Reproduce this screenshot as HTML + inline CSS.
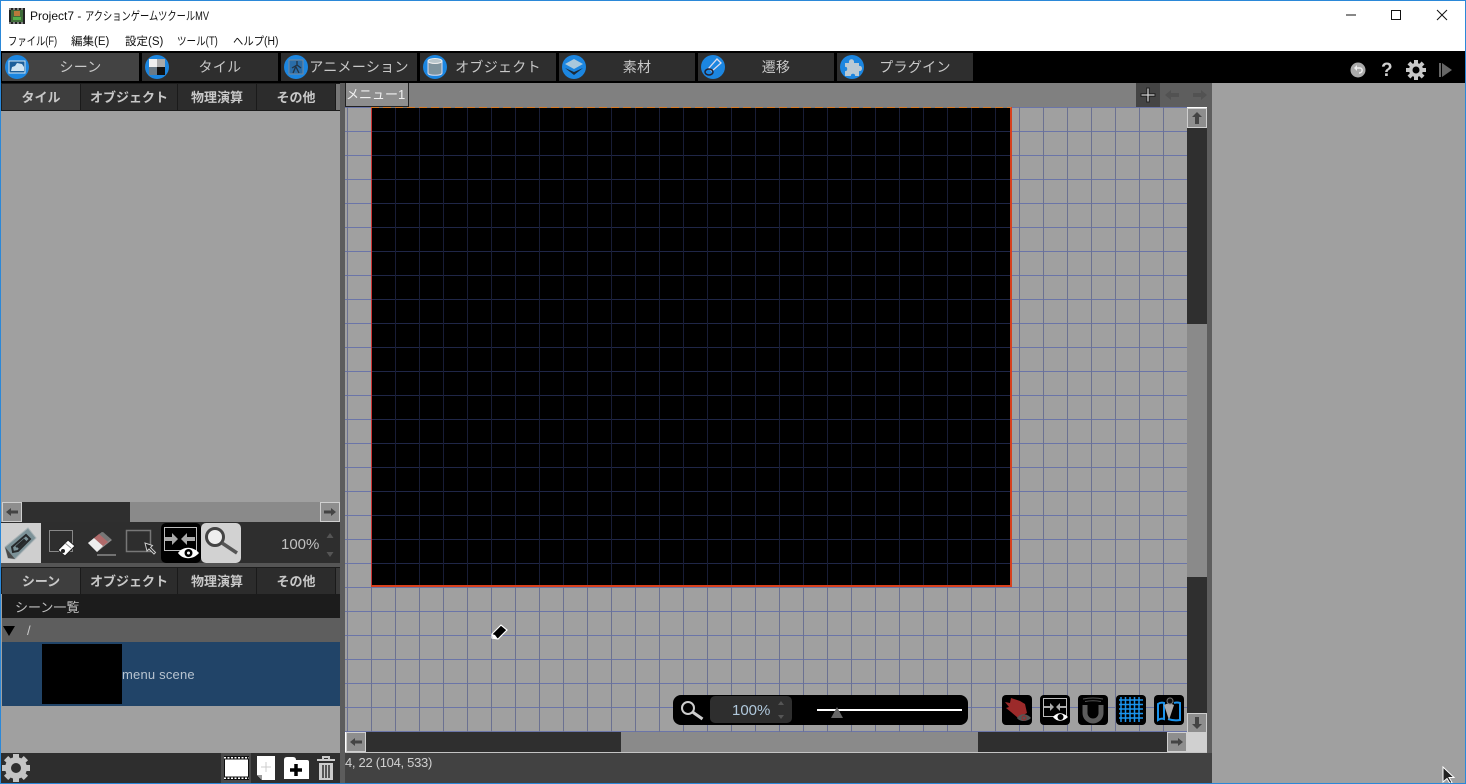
<!DOCTYPE html>
<html lang="ja"><head><meta charset="utf-8"><title>Project7</title>
<style>
*{box-sizing:border-box}
html,body{margin:0;padding:0;width:1466px;height:784px;overflow:hidden;background:#fff}
body{position:relative;font-family:"Liberation Sans","Noto Sans CJK JP",sans-serif}
.a{position:absolute}
.t{position:absolute;white-space:nowrap;line-height:1}
.sx{display:inline-block;transform-origin:left center}
.tab{position:absolute;top:53px;height:28px;background:#2e2e2e;color:#c8c8c8;font-size:14px;line-height:28px;white-space:nowrap}
.tab span{position:absolute;top:0;left:20px;right:0;text-align:center;letter-spacing:.3px}
.tab svg{position:absolute;left:2px;top:1px}
.st{position:absolute;height:26px;background:#2c2c2c;color:#c8c8c8;font-size:13px;font-weight:bold;line-height:28px;text-align:center;white-space:nowrap;border-right:1px solid #1a1a1a}
.btn{position:absolute;width:20px;height:20px;background:#8e8e8e;border:1px solid #cfcfcf}
.btn svg,.a svg{display:block}
</style></head><body>

<!-- title bar -->
<svg class="a" style="left:9px;top:8px" width="16" height="16" viewBox="0 0 16 16"><rect width="16" height="16" fill="#222"/><rect x="2" y="2" width="12" height="12" fill="#3f6b3a"/><rect x="5" y="3" width="6" height="5" fill="#b9793b"/><rect x="4" y="9" width="8" height="3" fill="#55b04a"/><path d="M0 1h16M0 15h16" stroke="#ddd" stroke-dasharray="2 2"/></svg>
<div class="t" style="left:30px;top:10px;font-size:12px;color:#111">Project7 - <span class="sx" style="transform:scaleX(.77)">アクションゲームツクールMV</span></div>
<div class="t sx" style="left:8px;top:37px;font-size:11.5px;color:#111;transform:scaleX(.81)">ファイル(F)</div>
<div class="t" style="left:71px;top:37px;font-size:11.5px;color:#111">編集(E)</div>
<div class="t" style="left:125px;top:37px;font-size:11.5px;color:#111">設定(S)</div>
<div class="t sx" style="left:177px;top:37px;font-size:11.5px;color:#111;transform:scaleX(.83)">ツール(T)</div>
<div class="t sx" style="left:233px;top:37px;font-size:11.5px;color:#111;transform:scaleX(.9)">ヘルプ(H)</div>
<svg class="a" style="left:1340px;top:8px" width="115" height="14" viewBox="0 0 115 14"><path d="M6 7h10" stroke="#111"/><rect x="51.5" y="2.5" width="9" height="9" fill="none" stroke="#111"/><path d="M97 2l10 10M107 2l-10 10" stroke="#111"/></svg>

<!-- toolbar -->
<div class="a" style="left:1px;top:51px;width:1464px;height:32px;background:#000"></div>
<div class="tab" style="left:2px;width:137px;background:#434343"><svg width="26" height="26" viewBox="0 0 26 26"><circle cx="13" cy="13" r="12" fill="#1c86e0"/><rect x="5" y="7" width="16" height="12" fill="#1d5f9a" stroke="#cfe4f2"/><path d="M7 17l1-4 3-1 2-3 5 1 2 3v4z" fill="#cfe4f2"/></svg><span>シーン</span></div>
<div class="tab" style="left:142px;width:136px"><svg width="26" height="26" viewBox="0 0 26 26"><circle cx="13" cy="13" r="12" fill="#1c86e0"/><rect x="5" y="5" width="8" height="8" fill="#eee"/><rect x="13" y="5" width="8" height="8" fill="#aaa"/><rect x="5" y="13" width="8" height="8" fill="#6b7a86"/><rect x="13" y="13" width="8" height="8" fill="#111"/></svg><span>タイル</span></div>
<div class="tab" style="left:281px;width:136px"><svg width="26" height="26" viewBox="0 0 26 26"><circle cx="13" cy="13" r="12" fill="#1c86e0"/><rect x="6" y="6" width="14" height="14" fill="#2a6da8" stroke="#789"/><path d="M14 7v4l-5 3M14 11l4 3M13 12l-3 7M13 13l3 6" stroke="#234" fill="none" stroke-width="1.300"/></svg><span>アニメーション</span></div>
<div class="tab" style="left:420px;width:136px"><svg width="26" height="26" viewBox="0 0 26 26"><circle cx="13" cy="13" r="12" fill="#1c86e0"/><path d="M6 7v12c0 3 14 3 14 0V7z" fill="#7f949e" stroke="#dde" /><ellipse cx="13" cy="7" rx="7" ry="2.500" fill="#b8c6cc" stroke="#eee"/></svg><span>オブジェクト</span></div>
<div class="tab" style="left:559px;width:136px"><svg width="26" height="26" viewBox="0 0 26 26"><circle cx="13" cy="13" r="12" fill="#1c86e0"/><path d="M13 5l9 5-9 5-9-5z" fill="#a9c8dc"/><path d="M4 14l9 4 9-4-9 7z" fill="#1a2a38"/></svg><span>素材</span></div>
<div class="tab" style="left:698px;width:136px"><svg width="26" height="26" viewBox="0 0 26 26"><circle cx="13" cy="13" r="12" fill="#1c86e0"/><path d="M17 5l4 4-9 8-3-3z" fill="none" stroke="#dde" stroke-width="1.300"/><ellipse cx="9" cy="18" rx="4" ry="3" fill="none" stroke="#223" stroke-width="1.500"/></svg><span>遷移</span></div>
<div class="tab" style="left:837px;width:136px"><svg width="26" height="26" viewBox="0 0 26 26"><circle cx="13" cy="13" r="12" fill="#1c86e0"/><path d="M6 9h4c-1-5 6-5 5 0h5v3c4-1 4 6 0 5v5h-4c1-3-5-3-4 0H6v-5c3 1 3-5 0-4z" fill="#b9c9d4"/></svg><span>プラグイン</span></div>
<svg class="a" style="left:1350px;top:62px" width="16" height="16" viewBox="0 0 16 16"><circle cx="8" cy="8" r="7.500" fill="#aaa"/><path d="M5 6h5c3 0 3 5-1 5" fill="none" stroke="#eee" stroke-width="1.500"/><path d="M7 3L4 6l3 3z" fill="#eee"/></svg>
<div class="t" style="left:1381px;top:61px;font-size:19px;font-weight:bold;color:#d0d0d0">?</div>
<svg class="a" style="left:1406px;top:60px" width="20" height="20" viewBox="0 0 20 20"><g fill="#c8c8c8"><circle cx="10" cy="10" r="7"/><path d="M8 0h4v4H8zM8 16h4v4H8zM0 8h4v4H0zM16 8h4v4h-4z"/><path d="M8 0h4v4H8z" transform="rotate(45 10 10)"/><path d="M8 16h4v4H8z" transform="rotate(45 10 10)"/><path d="M0 8h4v4H0z" transform="rotate(45 10 10)"/><path d="M16 8h4v4h-4z" transform="rotate(45 10 10)"/></g><circle cx="10" cy="10" r="3.500" fill="#000"/></svg>
<svg class="a" style="left:1439px;top:63px" width="14" height="14" viewBox="0 0 14 14"><rect x="0" y="0" width="2" height="14" fill="#666"/><path d="M3 0l10 7-10 7z" fill="#666"/></svg>

<!-- left panel -->
<div class="a" style="left:1px;top:83px;width:339px;height:670px;background:#a0a0a0"></div>
<div class="a" style="left:1px;top:83px;width:339px;height:28px;background:#1c1c1c"></div>
<div class="st" style="left:2px;top:84px;width:79px;background:#3e3e3e">タイル</div>
<div class="st" style="left:81px;top:84px;width:97px">オブジェクト</div>
<div class="st" style="left:178px;top:84px;width:79px">物理演算</div>
<div class="st" style="left:257px;top:84px;width:79px">その他</div>
<div class="a" style="left:336px;top:84px;width:4px;height:26px;background:#777"></div>

<div class="a" style="left:2px;top:502px;width:338px;height:20px;background:#8a8a8a"></div>
<div class="a" style="left:22px;top:502px;width:108px;height:20px;background:#2f2f2f"></div>
<div class="btn" style="left:2px;top:502px"><svg width="18" height="18" viewBox="0 0 18 18"><path d="M3 9l5-4v2.500h7v3H8V13z" fill="#444"/></svg></div>
<div class="btn" style="left:320px;top:502px"><svg width="18" height="18" viewBox="0 0 18 18"><path d="M15 9l-5-4v2.500H3v3h7V13z" fill="#444"/></svg></div>

<div class="a" style="left:1px;top:522px;width:339px;height:41px;background:#2e2e2e"></div>
<div class="a" style="left:1px;top:523px;width:40px;height:40px;background:#cfcfcf"></div>
<svg class="a" style="left:4px;top:527px" width="34" height="34" viewBox="0 0 34 34"><path d="M1 20L24 1l8 10L11 32l-7-1z" fill="#7c9298" stroke="#a9b3b6"/><path d="M8 20l14-12 4 4-12 12-5 1zM12 20l8-7 1 1-7 7" fill="none" stroke="#26292b" stroke-width="2"/><path d="M1 20l3 11 7 1z" fill="#4a4a4a"/></svg>
<svg class="a" style="left:48px;top:529px" width="30" height="30" viewBox="0 0 30 30"><rect x="1.500" y="1.500" width="23" height="21" fill="none" stroke="#888"/><path d="M10 21l10-10 7 6-10 10z" fill="#fff" stroke="#222"/><circle cx="15" cy="22" r="2" fill="#222"/><path d="M17 14l6 5" stroke="#888"/></svg>
<svg class="a" style="left:85px;top:529px" width="32" height="30" viewBox="0 0 32 30"><path d="M3 14L17 3l10 8-15 12z" fill="#8a8a8a"/><path d="M3 14l6-5 9 8-6 6z" fill="#eee"/><path d="M14 5l4-2 8 7-4 3z" fill="#777"/><path d="M9 9l5-4 9 8-5 4z" fill="#b06a6a"/><path d="M12 26h19" stroke="#888" stroke-width="1.500"/></svg>
<svg class="a" style="left:125px;top:529px" width="32" height="30" viewBox="0 0 32 30"><rect x="1.500" y="1.500" width="24" height="21" fill="none" stroke="#777" stroke-width="1.500"/><path d="M20 14l2 8 2-2 5 5 1.500-1.500-5-5 2-2z" fill="#222" stroke="#ccc"/></svg>
<div class="a" style="left:161px;top:523px;width:40px;height:40px;background:#000;border-radius:5px"></div>
<svg class="a" style="left:161px;top:523px" width="40" height="40" viewBox="0 0 40 40"><rect x="3.500" y="4.500" width="32" height="23" fill="none" stroke="#bbb"/><path d="M4 14h7v-4l6 6-6 6v-4H4zM34 14h-8v-4l-6 6 6 6v-4h8z" fill="#aaa"/><path d="M17 30c5-7 15-7 21 0-6 7-16 7-21 0z" fill="#fff"/><circle cx="27.500" cy="30" r="4" fill="#000"/><circle cx="27.500" cy="30" r="1.500" fill="#fff"/></svg>
<div class="a" style="left:201px;top:523px;width:40px;height:40px;background:#d2d2d2;border-radius:5px"></div>
<svg class="a" style="left:203px;top:525px" width="36" height="30" viewBox="0 0 36 30"><circle cx="12" cy="12" r="8.500" fill="#eee" stroke="#444" stroke-width="3"/><path d="M19 18l15 10" stroke="#555" stroke-width="3.500"/></svg>
<div class="t" style="left:281px;top:537px;font-size:15px;color:#c0c0c0">100%</div>
<svg class="a" style="left:324px;top:532px" width="12" height="26" viewBox="0 0 12 26"><path d="M6 1l3.500 5h-7zM6 25l3.500-5h-7z" fill="#555"/></svg>

<div class="a" style="left:1px;top:563px;width:339px;height:31px;background:#555"></div>
<div class="a" style="left:1px;top:567px;width:339px;height:27px;background:#1c1c1c"></div>
<div class="st" style="left:2px;top:568px;width:79px;background:#3e3e3e">シーン</div>
<div class="st" style="left:81px;top:568px;width:97px">オブジェクト</div>
<div class="st" style="left:178px;top:568px;width:79px">物理演算</div>
<div class="st" style="left:257px;top:568px;width:79px">その他</div>
<div class="a" style="left:336px;top:568px;width:4px;height:26px;background:#3a3a3a"></div>
<div class="a" style="left:2px;top:594px;width:338px;height:24px;background:#1c1c1c"></div>
<div class="t" style="left:15px;top:601px;font-size:13px;color:#c0c0c0">シーン一覧</div>
<div class="a" style="left:2px;top:618px;width:338px;height:24px;background:#5e5e5e"></div>
<svg class="a" style="left:3px;top:625px" width="12" height="12" viewBox="0 0 12 12"><path d="M0 1h12L6 11z" fill="#000"/></svg>
<div class="t" style="left:27px;top:624px;font-size:13px;color:#ccc">/</div>
<div class="a" style="left:2px;top:642px;width:338px;height:64px;background:#214468"></div>
<div class="a" style="left:42px;top:644px;width:80px;height:60px;background:#000"></div>
<div class="t" style="left:122px;top:668px;font-size:13px;letter-spacing:.2px;color:#b8c4d0">menu scene</div>

<div class="a" style="left:1px;top:753px;width:339px;height:30px;background:#2e2e2e"></div>
<svg class="a" style="left:1px;top:753px" width="30" height="30" viewBox="0 0 30 30"><g fill="#c4c4c4"><circle cx="15" cy="15" r="11"/><path d="M12 1h6v5h-6zM12 24h6v5h-6zM1 12h5v6H1zM24 12h5v6h-5z"/><g transform="rotate(45 15 15)"><path d="M12 1h6v5h-6zM12 24h6v5h-6zM1 12h5v6H1zM24 12h5v6h-5z"/></g></g><circle cx="15" cy="15" r="5" fill="#2e2e2e"/></svg>
<div class="a" style="left:221px;top:753px;width:30px;height:30px;background:#4a4a4a"></div>
<svg class="a" style="left:224px;top:756px" width="25" height="24" viewBox="0 0 25 24"><rect width="25" height="24" fill="#111"/><rect x="1" y="3.500" width="23" height="17" fill="#fff"/><path d="M0 1.800h25M0 22.200h25" stroke="#fff" stroke-width="1.500" stroke-dasharray="2 1.500"/></svg>
<svg class="a" style="left:256px;top:755px" width="20" height="26" viewBox="0 0 20 26"><path d="M1 1h18v24H6l-5-5z" fill="#fff"/><path d="M10 7v10M5 12h10" stroke="#ccc"/><path d="M1 20h5v5z" fill="#999"/></svg>
<svg class="a" style="left:284px;top:757px" width="25" height="22" viewBox="0 0 25 22"><path d="M0 3q0-3 3-3h6q3 0 3 3h11q2 0 2 2v17H0z" fill="#fff"/><path d="M12 7v12M6 13h12" stroke="#000" stroke-width="3.500"/></svg>
<svg class="a" style="left:316px;top:756px" width="20" height="25" viewBox="0 0 20 25"><path d="M1 4h18M7 3V1h6v2" stroke="#ccc" stroke-width="2" fill="none"/><path d="M3 7h14v17H3z" fill="#ccc"/><path d="M7 9v13M10 9v13M13 9v13" stroke="#2e2e2e" stroke-width="1.500"/></svg>

<!-- divider -->
<div class="a" style="left:340px;top:83px;width:5px;height:700px;background:#5c5c5c"></div>

<!-- center header -->
<div class="a" style="left:345px;top:83px;width:867px;height:24px;background:#808080"></div>
<div class="a" style="left:345px;top:83px;width:64px;height:24px;background:#8e8e8e;border:1px solid #222;border-top:none"></div>
<div class="t" style="left:346px;top:88px;font-size:13px;color:#f0f0f0">メニュー1</div>
<div class="a" style="left:1136px;top:83px;width:24px;height:24px;background:#444"></div>
<svg class="a" style="left:1139px;top:86px" width="18" height="18" viewBox="0 0 18 18"><path d="M9 1.500v15M1.500 9h15" stroke="#1e1e1e" stroke-width="3.500"/><path d="M9 2.500v13M2.500 9h13" stroke="#cfcfcf" stroke-width="1.300"/></svg>
<div class="a" style="left:1160px;top:83px;width:52px;height:24px;background:#5e5e5e"></div>
<svg class="a" style="left:1164px;top:89px" width="44" height="12" viewBox="0 0 44 12"><path d="M1 6l6-5v3h8v4H7v3zM43 6l-6-5v3h-8v4h8v3z" fill="#525252"/></svg>

<!-- canvas -->
<div class="a" style="left:345px;top:107px;width:842px;height:625px;background-color:#a0a0a0;background-image:repeating-linear-gradient(to right,transparent 0,transparent 2px,#6b7191 2px,#6b7191 3px,transparent 3px,transparent 24px),repeating-linear-gradient(to bottom,#6b75a8 0,#6b75a8 1px,transparent 1px,transparent 24px)"></div>
<div class="a" style="left:372px;top:108px;width:638px;height:478px;background-color:#000;background-image:repeating-linear-gradient(to right,transparent 0,transparent 23px,#181d36 23px,#181d36 24px),repeating-linear-gradient(to bottom,transparent 0,transparent 23px,#1f2647 23px,#1f2647 24px)"></div>
<div class="a" style="left:371px;top:107px;width:1px;height:480px;background:#c33"></div>
<div class="a" style="left:1010px;top:107px;width:2px;height:480px;background:#d8401c"></div>
<div class="a" style="left:371px;top:107px;width:640px;height:1px;background:repeating-linear-gradient(to right,#d87a25 0,#d87a25 8px,#7a7a7a 8px,#7a7a7a 12px)"></div>
<div class="a" style="left:371px;top:585px;width:641px;height:2px;background:#d8401c"></div>
<svg class="a" style="left:489px;top:622px" width="20" height="19" viewBox="0 0 20 19"><path d="M3 12l9-9 6 5-9 9-6-1z" fill="#000" stroke="#fff" stroke-width="1.200"/><path d="M3 12l3 1 3 4-5-1z" fill="#fff"/></svg>

<!-- zoom bar -->
<div class="a" style="left:673px;top:695px;width:295px;height:30px;background:#000;border-radius:8px"></div>
<svg class="a" style="left:679px;top:700px" width="26" height="22" viewBox="0 0 26 22"><circle cx="9" cy="8" r="6" fill="none" stroke="#ccc" stroke-width="2"/><path d="M13.500 12l10 7" stroke="#ccc" stroke-width="3"/></svg>
<div class="a" style="left:710px;top:696px;width:82px;height:27px;background:#2e2e2e;border-radius:5px"></div>
<div class="t" style="left:732px;top:703px;font-size:15px;color:#b0c8dc">100%</div>
<svg class="a" style="left:775px;top:700px" width="12" height="20" viewBox="0 0 12 20"><path d="M6 1l3 4H3zM6 19l3-4H3z" fill="#555"/></svg>
<div class="a" style="left:817px;top:709px;width:145px;height:2px;background:#fff"></div>
<svg class="a" style="left:830px;top:707px" width="14" height="12" viewBox="0 0 14 12"><path d="M7 0l6 11H1z" fill="#666"/></svg>

<!-- overlay buttons -->
<div class="a" style="left:1002px;top:695px;width:30px;height:30px;background:#000;border-radius:4px"></div>
<svg class="a" style="left:1002px;top:695px" width="30" height="30" viewBox="0 0 30 30"><path d="M3 7l5 1 1-5 9 3 5 3 2 9-9 5-7-6-5-4 3-1z" fill="#9c2a2a"/><path d="M15 23c3-5 10-5 14 0-4 4-11 4-14 0z" fill="#555"/><circle cx="22" cy="23" r="2" fill="none" stroke="#9c2a2a"/></svg>
<div class="a" style="left:1040px;top:695px;width:30px;height:30px;background:#000;border-radius:4px"></div>
<svg class="a" style="left:1040px;top:695px" width="30" height="30" viewBox="0 0 30 30"><rect x="3.500" y="3.500" width="23" height="18" fill="none" stroke="#bbb"/><path d="M4 11h6V8l4 4-4 4v-3H4zM26 11h-6V8l-4 4 4 4v-3h6z" fill="#aaa"/><path d="M13 22c4-5 10-5 15 0-5 5-11 5-15 0z" fill="#fff"/><circle cx="20.500" cy="22" r="3" fill="#000"/></svg>
<div class="a" style="left:1078px;top:695px;width:30px;height:30px;background:#000;border-radius:4px"></div>
<svg class="a" style="left:1078px;top:695px" width="30" height="30" viewBox="0 0 30 30"><path d="M7 10v8a8 8 0 0 0 16 0v-8" fill="none" stroke="#5c5c5c" stroke-width="5"/><path d="M5 4q10-2 20 0M7 6.500q8-1.500 16 0" stroke="#555" fill="none"/></svg>
<div class="a" style="left:1116px;top:695px;width:30px;height:30px;background:#000;border-radius:4px"></div>
<svg class="a" style="left:1116px;top:695px" width="30" height="30" viewBox="0 0 30 30"><path d="M3 5h24M3 9.500h24M3 14h24M3 18.500h24M3 23h24M5 2v25M9.500 2v25M14 2v25M18.500 2v25M23 2v25" stroke="#1a94ee" stroke-width="1.500"/></svg>
<div class="a" style="left:1154px;top:695px;width:30px;height:30px;background:#000;border-radius:4px"></div>
<svg class="a" style="left:1154px;top:695px" width="30" height="30" viewBox="0 0 30 30"><path d="M4 9q3-2 6-1v16q-3-1-6 1zM20 8q3-1 6 0v17q-6 1-12-1" fill="none" stroke="#1a94ee" stroke-width="2"/><path d="M10 10q5-3 10 0l-5 15z" fill="#aaa"/><circle cx="16" cy="6" r="3" fill="#111" stroke="#777"/></svg>

<!-- vertical scrollbar -->
<div class="a" style="left:1187px;top:108px;width:20px;height:625px;background:#8a8a8a"></div>
<div class="a" style="left:1187px;top:128px;width:20px;height:196px;background:#2f2f2f"></div>
<div class="a" style="left:1187px;top:577px;width:20px;height:136px;background:#2f2f2f"></div>
<div class="btn" style="left:1187px;top:108px"><svg width="18" height="18" viewBox="0 0 18 18"><path d="M9 3l-5 5h3v7h4V8h3z" fill="#444"/></svg></div>
<div class="btn" style="left:1187px;top:713px"><svg width="18" height="18" viewBox="0 0 18 18"><path d="M9 15l-5-5h3V3h4v7h3z" fill="#444"/></svg></div>
<div class="a" style="left:1207px;top:107px;width:5px;height:646px;background:#5e5e5e"></div>

<!-- horizontal scrollbar -->
<div class="a" style="left:346px;top:732px;width:841px;height:20px;background:#8a8a8a"></div>
<div class="a" style="left:366px;top:732px;width:255px;height:20px;background:#2f2f2f"></div>
<div class="a" style="left:978px;top:732px;width:189px;height:20px;background:#2f2f2f"></div>
<div class="btn" style="left:346px;top:732px"><svg width="18" height="18" viewBox="0 0 18 18"><path d="M3 9l5-4v2.500h7v3H8V13z" fill="#444"/></svg></div>
<div class="btn" style="left:1167px;top:732px"><svg width="18" height="18" viewBox="0 0 18 18"><path d="M15 9l-5-4v2.500H3v3h7V13z" fill="#444"/></svg></div>
<div class="a" style="left:1187px;top:732px;width:20px;height:20px;background:#d0d0d0"></div>
<div class="a" style="left:345px;top:752px;width:862px;height:1px;background:#c4c4c4"></div>

<!-- status -->
<div class="a" style="left:345px;top:753px;width:867px;height:30px;background:#424242"></div>
<div class="t" style="left:345px;top:756px;font-size:13px;letter-spacing:-.3px;color:#d0d0d0">4, 22 (104, 533)</div>

<!-- right panel -->
<div class="a" style="left:1212px;top:83px;width:253px;height:700px;background:#a0a0a0"></div>
<svg class="a" style="left:1441px;top:766px" width="15" height="18" viewBox="0 0 15 18"><path d="M2 1v15l4-3.500 3 5 2-1-3-5h5z" fill="#222" stroke="#fff"/></svg>

<!-- window border -->
<div class="a" style="left:0;top:0;width:1466px;height:784px;border:1px solid #2b88d8;pointer-events:none"></div>
</body></html>
